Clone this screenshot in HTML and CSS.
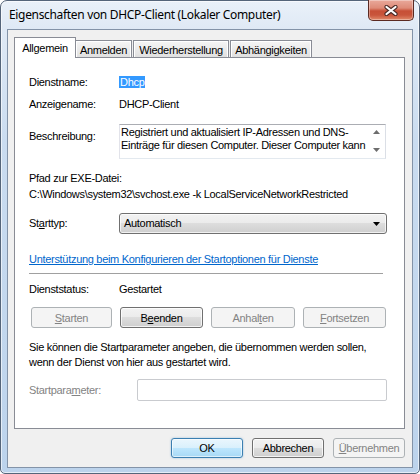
FILE: index.html
```html
<!DOCTYPE html>
<html lang="de">
<head>
<meta charset="utf-8">
<title>Eigenschaften von DHCP-Client</title>
<link rel="stylesheet" href="styles.css">
</head>
<body>
<div class="window">
  <div class="titlebar">
    <div class="title">Eigenschaften von DHCP-Client (Lokaler Computer)</div>
    <div class="close">
      <svg width="14" height="11" viewBox="0 0 14 11"><path d="M2.5 2 L11.5 9 M11.5 2 L2.5 9" stroke="#4a2a26" stroke-width="4.2" stroke-linecap="round"/><path d="M2.5 2 L11.5 9 M11.5 2 L2.5 9" stroke="#ffffff" stroke-width="2.2" stroke-linecap="round"/></svg>
    </div>
  </div>
  <div class="client">
    <div class="tabs">
      <div class="tab sel">Allgemein</div>
      <div class="tab t2">Anmelden</div>
      <div class="tab t3">Wiederherstellung</div>
      <div class="tab t4">Abhängigkeiten</div>
    </div>
    <div class="panel">
      <div class="row r1"><span class="lbl">Dienstname:</span><span class="val"><span class="hl">Dhcp</span></span></div>
      <div class="row r2"><span class="lbl">Anzeigename:</span><span class="val">DHCP-Client</span></div>
      <div class="row r3"><span class="lbl lbl-desc">Beschreibung:</span>
        <div class="desc">
          <div class="desc-text">Registriert und aktualisiert IP-Adressen und DNS-<br>Einträge für diesen Computer. Dieser Computer kann</div>
          <div class="sb">
            <svg width="7" height="4" viewBox="0 0 7 4"><path d="M0 4 L3.5 0 L7 4 Z" fill="#6d6d6d"/></svg>
            <svg width="7" height="4" viewBox="0 0 7 4"><path d="M0 0 L3.5 4 L7 0 Z" fill="#6d6d6d"/></svg>
          </div>
        </div>
      </div>
      <div class="pfad">Pfad zur EXE-Datei:</div>
      <div class="path">C:\Windows\system32\svchost.exe -k LocalServiceNetworkRestricted</div>
      <div class="row r4"><span class="lbl">St<u>a</u>rttyp:</span>
        <div class="combo"><span>Automatisch</span>
          <svg width="7" height="4" viewBox="0 0 7 4"><path d="M0 0 L3.5 4 L7 0 Z" fill="#000"/></svg>
        </div>
      </div>
      <a class="link" href="#">Unterstützung beim Konfigurieren der Startoptionen für Dienste</a>
      <div class="sep"></div>
      <div class="row r5"><span class="lbl">Dienststatus:</span><span class="val">Gestartet</span></div>
      <div class="svc-btns">
        <div class="btn disabled b1"><u>S</u>tarten</div>
        <div class="btn b2">B<u>e</u>enden</div>
        <div class="btn disabled b3">Anhal<u>t</u>en</div>
        <div class="btn disabled b4"><u>F</u>ortsetzen</div>
      </div>
      <p class="hint">Sie können die Startparameter angeben, die übernommen werden sollen,<br>wenn der Dienst von hier aus gestartet wird.</p>
      <div class="row r6"><span class="lbl dim">Startpara<u>m</u>eter:</span><div class="input"></div></div>
    </div>
    <div class="footer">
      <div class="btn fbtn default">OK</div>
      <div class="btn fbtn">Abbrechen</div>
      <div class="btn fbtn disabled"><u>Ü</u>bernehmen</div>
    </div>
  </div>
</div>
</body>
</html>
```
FILE: styles.css
```css
* { box-sizing: border-box; }
html, body { margin: 0; padding: 0; }
body {
  width: 420px; height: 474px; overflow: hidden;
  background: #ffffff;
  font-family: "Liberation Sans", Arial, sans-serif;
  font-size: 11px; letter-spacing: -0.3px; color: #000;
}
u { text-decoration: underline; text-underline-offset: 1px; }

.window {
  width: 420px; height: 474px;
  border: 1px solid #55657a;
  border-radius: 7px 7px 5px 5px;
  background: linear-gradient(180deg, #eaf1f9 0px, #dfe9f5 28px, #cadcf0 140px, #bcd3ec 100%);
  box-shadow: inset 0 0 0 1px rgba(255,255,255,0.6);
  display: flex; flex-direction: column;
}
.titlebar {
  height: 28px; flex: none;
  display: flex; justify-content: space-between; align-items: flex-start;
  padding-left: 8px; padding-right: 5px;
}
.title {
  font-family: "Noto Sans", "Open Sans", sans-serif;
  font-size: 12px; line-height: 28px; color: #000;
  letter-spacing: -0.33px;
}
.close {
  margin-top: -1px;
  width: 46px; height: 21px;
  border: 1px solid #5b2a22; border-top: none;
  border-radius: 0 0 5px 5px;
  background: linear-gradient(180deg, #e9a99b 0%, #de8b78 40%, #c74f36 55%, #c9553b 75%, #e08a6a 100%);
  box-shadow: inset 0 0 0 1px rgba(255,255,255,0.35);
  display: flex; align-items: center; justify-content: center;
}

.client {
  flex: none;
  margin: 0 6px;
  height: 439px;
  border: 1px solid #8393a8;
  background: #f0f0f0;
  padding: 7px 7px 0 6px;
}

.tabs { height: 20px; display: flex; align-items: flex-end; }
.tab {
  height: 17px;
  border: 1px solid #898c95; border-bottom: none;
  background: linear-gradient(180deg, #f5f5f5 0%, #ebebeb 50%, #e0e0e0 100%);
  box-shadow: inset 1px 1px 0 #ffffff, inset -1px 0 0 #ffffff;
  display: flex; align-items: center; justify-content: center;
  padding-top: 2px;
  white-space: nowrap;
}
.tab.sel {
  width: 62px; height: 21px; margin-bottom: -1px;
  background: #ffffff; box-shadow: none;
  position: relative; z-index: 2;
  padding-top: 0;
}
.tab.t2 { width: 57px; margin-left: -1px; }
.tab.t3 { width: 96px; margin-left: 1px; }
.tab.t4 { width: 82px; margin-left: 1px; }

.panel {
  width: 391px; height: 372px;
  border: 1px solid #898c95;
  background: #ffffff;
  padding: 18px 17px 0 14px;
  position: relative;
}

.row { display: grid; grid-template-columns: 90px 1fr; line-height: 13px; }
.r2 { margin-top: 9px; }
.r3 { margin-top: 13px; align-items: start; }
.lbl-desc { margin-top: 6px; }
.hl { background: #3399ff; color: #ffffff; padding: 0 1px; display: inline-block; line-height: 12px; height: 12px; }

.desc {
  width: 267px; height: 35px;
  border: 1px solid #abadb3;
  border-color: #abadb3 #dbdfe6 #e3e9ef #e2e3ea;
  background: #fff;
  display: flex;
}
.desc-text { flex: 1; padding: 1px 0 0 1px; line-height: 13px; white-space: nowrap; overflow: hidden; }
.sb { width: 17px; display: flex; flex-direction: column; align-items: center; justify-content: space-between; padding: 5px 0 6px; }

.pfad { margin-top: 13px; line-height: 13px; }
.path { margin-top: 3px; line-height: 13px; white-space: nowrap; }

.r4 { margin-top: 12px; align-items: center; }
.combo {
  height: 21px;
  border: 1px solid #707070; border-radius: 3px;
  background: linear-gradient(180deg, #f2f2f2 0%, #ebebeb 50%, #dddddd 50%, #cfcfcf 100%);
  box-shadow: inset 0 0 0 1px rgba(255,255,255,0.7);
  display: flex; align-items: center; justify-content: space-between;
  padding: 0 6px 0 4px;
}

.link { display: block; margin-top: 19px; line-height: 13px; color: #0066cc; text-decoration: underline; white-space: nowrap; }
.sep { width: 354px; margin-top: 7px; height: 1px; background: #a0a0a0; }
.r5 { margin-top: 9px; }

.svc-btns { margin: 11px 1px 0 2px; display: flex; justify-content: space-between; }
.btn {
  height: 21px;
  border: 1px solid #707070; border-radius: 3px;
  background: linear-gradient(180deg, #f2f2f2 0%, #ebebeb 50%, #dddddd 50%, #cfcfcf 100%);
  box-shadow: inset 0 0 0 1px rgba(255,255,255,0.75);
  display: flex; align-items: center; justify-content: center;
  white-space: nowrap;
}
.btn.disabled { border-color: #adb2b5; background: #f4f4f4; color: #838383; box-shadow: none; }
.b1 { width: 81px; } .b2 { width: 83px; } .b3 { width: 84px; } .b4 { width: 83px; }

.hint { margin: 12px 0 0 0; line-height: 15px; }

.r6 { grid-template-columns: 108px 1fr; margin-top: 9px; align-items: center; }
.dim { color: #838383; }
.input { height: 22px; border: 1px solid #c9cbcf; border-radius: 2px; background: #ffffff; }

.footer { margin-top: 9px; display: flex; justify-content: flex-end; gap: 9px; }
.fbtn { width: 72px; height: 20px; }
.btn.default {
  border-color: #3c7fb1;
  background: linear-gradient(180deg, #eaf6fd 0%, #d9f0fc 50%, #bee6fd 50%, #a7d9f5 100%);
  box-shadow: inset 0 0 0 1px rgba(255,255,255,0.6), 0 0 2px rgba(60,140,200,0.5);
}
```
